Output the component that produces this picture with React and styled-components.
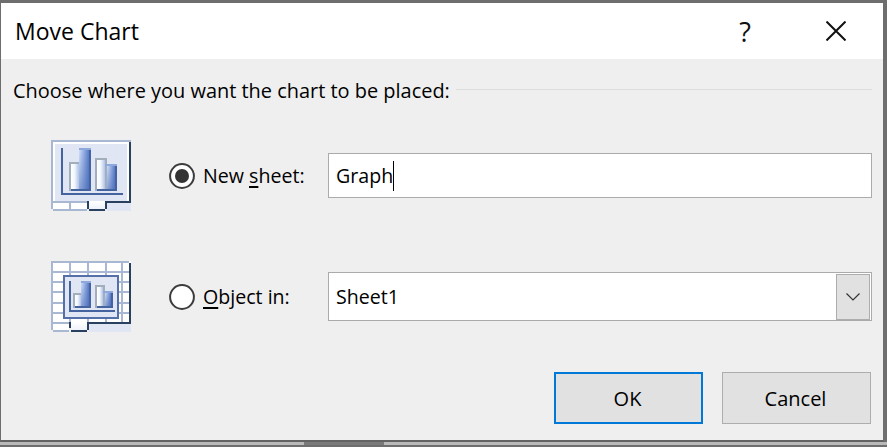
import React from "react";
import styled, { createGlobalStyle } from "styled-components";

const Global = createGlobalStyle`
  html, body { margin: 0; padding: 0; background: #6e6e6e; }
  body { font-family: "Open Sans", "Noto Sans", "Liberation Sans", sans-serif; color: #000; }
  * { box-sizing: border-box; }
`;

const Page = styled.div`
  width: 887px;
  height: 447px;
  display: flex;
  flex-direction: column;
  overflow: hidden;
  background: #6e6e6e;
`;
const Dialog = styled.div`
  width: 885px;
  height: 442px;
  display: flex;
  flex-direction: column;
  border-top: 3px solid #6e6e6e;
  border-left: 1px solid #6e6e6e;
  border-right: 2px solid #6e6e6e;
  border-bottom: 2px solid #636363;
  background: #efefef;
`;
const TitleBar = styled.div`
  height: 56px;
  flex: none;
  background: #fff;
  display: flex;
  align-items: center;
  padding-left: 14px;
`;
const Title = styled.div`
  font-size: 23px;
  flex: 1;
`;
const HelpGlyph = styled.div`
  width: 30px;
  font-size: 27px;
  text-align: center;
  margin-right: 66px;
  color: #111;
`;
const CloseButton = styled.svg`
  width: 20px;
  height: 20px;
  margin-right: 37px;
  display: block;
`;
const Body = styled.div`
  flex: 1;
  display: flex;
  flex-direction: column;
  padding: 16px 11px 0 12px;
`;
const Legend = styled.div`
  display: flex;
  align-items: center;
  height: 30px;
  gap: 6px;
  margin-bottom: 35px;
  font-size: 19.95px;
  white-space: nowrap;
`;
const LegendRule = styled.div`
  flex: 1;
  height: 1px;
  margin-top: -2px;
  background: #dcdcdc;
`;
const Row = styled.div`
  display: flex;
  align-items: center;
  height: 71px;
  padding-left: 38px;
  margin-bottom: ${p => p.$mb}px;
`;
const Pict = styled.svg`
  width: 80px;
  height: 71px;
  flex: none;
  display: block;
  shape-rendering: crispEdges;
`;
const Radio = styled.svg`
  width: 26px;
  height: 26px;
  flex: none;
  margin-left: 38px;
  display: block;
`;
const Label = styled.label`
  width: 133px;
  padding-left: 8px;
  flex: none;
  font-size: 19.6px;
  white-space: nowrap;
  u { text-underline-offset: 3px; text-decoration-thickness: 2px; }
`;
const Field = styled.div`
  flex: 1;
  height: ${p => p.$h}px;
  background: #fff;
  border: 1px solid #ababab;
  display: flex;
  align-items: center;
  padding-left: 7px;
  font-size: 19.6px;
`;
const Caret = styled.span`
  display: inline-block;
  width: 1px;
  height: 30px;
  background: #000;
  flex: none;
`;
const FieldText = styled.span`
  flex: 1;
`;
const DropButton = styled.div`
  width: 34px;
  height: 46px;
  margin-right: 1px;
  flex: none;
  background: #e1e1e1;
  border: 1px solid #adadad;
  display: flex;
  align-items: center;
  justify-content: center;
`;
const Chevron = styled.svg`
  width: 14px;
  height: 8px;
  display: block;
`;
const Buttons = styled.div`
  display: flex;
  justify-content: flex-end;
  gap: 19px;
  padding-right: 1px;
`;
const Button = styled.div`
  width: 149px;
  height: 52px;
  padding-right: 2px;
  background: #e1e1e1;
  border: ${p => (p.$primary ? "2px solid #0078d7" : "1px solid #adadad")};
  display: flex;
  align-items: center;
  justify-content: center;
  font-size: 20px;
`;
const BottomStrip = styled.div`
  height: 3px;
  flex: none;
  background: #b9b9b9;
  padding-left: 304px;
`;
const StripThumb = styled.div`
  width: 80px;
  height: 3px;
  background: #7a7a7a;
`;

const LB = "#a8b8d2", DK = "#2a4060", PALE = "#e0e6f3", AX = "#45639f", GR = "#a3aebc";

const defs = pre => (
  <defs>
    <linearGradient id={pre + "w"} x1="0" x2="1" y1="0" y2="0">
      <stop offset="0" stopColor="#ffffff" />
      <stop offset="0.45" stopColor="#f2f6fd" />
      <stop offset="1" stopColor="#b0c2e6" />
    </linearGradient>
    <linearGradient id={pre + "b"} x1="0" x2="1" y1="0" y2="0">
      <stop offset="0" stopColor="#cfdefa" />
      <stop offset="1" stopColor="#5a7cc8" />
    </linearGradient>
    <linearGradient id={pre + "s"} x1="0" x2="0" y1="0" y2="1">
      <stop offset="0" stopColor="#3f62b0" stopOpacity="0" />
      <stop offset="1" stopColor="#3f62b0" stopOpacity="0.45" />
    </linearGradient>
    <linearGradient id={pre + "t"} x1="0" x2="0" y1="0" y2="1">
      <stop offset="0" stopColor="#ffffff" />
      <stop offset="1" stopColor="#eef2fa" />
    </linearGradient>
  </defs>
);

const ChartIcon = () => (
  <Pict viewBox="0 0 80 71">
    {defs("a")}
    <rect x="0" y="0" width="80" height="71" fill="#fff" />
    <rect x="0" y="0" width="80" height="2" fill={LB} />
    <rect x="0" y="0" width="2" height="69" fill={LB} />
    <rect x="78" y="2" width="2" height="61" fill={DK} />
    <rect x="4" y="4" width="72" height="57" fill={PALE} />
    <rect x="2" y="2" width="2" height="59" fill="#fff" />
    <rect x="10" y="8" width="2" height="47" fill={AX} />
    <rect x="10" y="53" width="62" height="2" fill={AX} />
    <rect x="18" y="22" width="10" height="29" fill={GR} />
    <rect x="20" y="24" width="8" height="25" fill="url(#aw)" />
    <rect x="28" y="8" width="12" height="43" fill="#8fa8dc" />
    <rect x="28" y="10" width="10" height="39" fill="url(#ab)" />
    <rect x="28" y="10" width="10" height="39" fill="url(#as)" />
    <rect x="38" y="10" width="2" height="41" fill={AX} />
    <rect x="20" y="49" width="20" height="2" fill={AX} />
    <rect x="44" y="18" width="12" height="33" fill={GR} />
    <rect x="46" y="20" width="8" height="29" fill="url(#aw)" />
    <rect x="54" y="24" width="12" height="27" fill="#8fa8dc" />
    <rect x="56" y="26" width="8" height="23" fill="url(#ab)" />
    <rect x="56" y="26" width="8" height="23" fill="url(#as)" />
    <rect x="54" y="26" width="2" height="25" fill={GR} />
    <rect x="64" y="26" width="2" height="25" fill={AX} />
    <rect x="46" y="49" width="20" height="2" fill={AX} />
    <rect x="0" y="61" width="80" height="10" fill="#efefef" />
    <rect x="0" y="61" width="38" height="2" fill={LB} />
    <rect x="0" y="63" width="2" height="6" fill={LB} />
    <rect x="2" y="63" width="16" height="6" fill="#fff" />
    <rect x="18" y="63" width="2" height="8" fill={LB} />
    <rect x="20" y="63" width="16" height="6" fill="#fff" />
    <rect x="2" y="69" width="16" height="2" fill={LB} />
    <rect x="20" y="69" width="16" height="2" fill={LB} />
    <rect x="36" y="61" width="2" height="8" fill={DK} />
    <rect x="38" y="61" width="16" height="8" fill="url(#at)" />
    <rect x="38" y="69" width="16" height="2" fill={DK} />
    <rect x="54" y="61" width="2" height="8" fill={DK} />
    <rect x="54" y="61" width="26" height="2" fill={DK} />
    <rect x="56" y="63" width="24" height="8" fill={PALE} />
  </Pict>
);

const hLines = [0, 10, 20, 30, 41, 51];
const vLines = [0, 18, 36, 54, 70];

const ObjectIcon = () => (
  <Pict viewBox="0 0 80 71">
    {defs("c")}
    <rect x="0" y="0" width="80" height="61" fill="#fff" />
    {hLines.map(y => <rect key={y} x="0" y={y} width="78" height="2" fill={LB} />)}
    {vLines.map(x => <rect key={x} x={x} y="0" width="2" height="61" fill={LB} />)}
    <rect x="78" y="2" width="2" height="61" fill={DK} />
    <rect x="12" y="14" width="56" height="44" fill="#5570a8" />
    <rect x="14" y="16" width="52" height="40" fill={PALE} />
    <rect x="18" y="20" width="2" height="31" fill={AX} />
    <rect x="18" y="49" width="46" height="2" fill={AX} />
    <rect x="22" y="32" width="8" height="15" fill={GR} />
    <rect x="24" y="34" width="6" height="11" fill="url(#cw)" />
    <rect x="30" y="20" width="10" height="27" fill="#8fa8dc" />
    <rect x="30" y="22" width="8" height="23" fill="url(#cb)" />
    <rect x="30" y="22" width="8" height="23" fill="url(#cs)" />
    <rect x="38" y="22" width="2" height="25" fill={AX} />
    <rect x="24" y="45" width="16" height="2" fill={AX} />
    <rect x="44" y="24" width="10" height="23" fill={GR} />
    <rect x="46" y="26" width="6" height="19" fill="url(#cw)" />
    <rect x="52" y="30" width="10" height="17" fill="#8fa8dc" />
    <rect x="54" y="32" width="6" height="13" fill="url(#cb)" />
    <rect x="54" y="32" width="6" height="13" fill="url(#cs)" />
    <rect x="52" y="32" width="2" height="15" fill={GR} />
    <rect x="60" y="32" width="2" height="15" fill={AX} />
    <rect x="46" y="45" width="16" height="2" fill={AX} />
    <rect x="0" y="61" width="80" height="10" fill="#efefef" />
    <rect x="0" y="61" width="18" height="2" fill={LB} />
    <rect x="0" y="63" width="2" height="6" fill={LB} />
    <rect x="2" y="63" width="16" height="6" fill="#fff" />
    <rect x="2" y="69" width="16" height="2" fill={LB} />
    <rect x="18" y="61" width="2" height="6" fill={DK} />
    <rect x="20" y="61" width="16" height="8" fill="url(#ct)" />
    <rect x="20" y="69" width="16" height="2" fill={DK} />
    <rect x="36" y="61" width="2" height="8" fill={DK} />
    <rect x="36" y="61" width="44" height="2" fill={DK} />
    <rect x="38" y="63" width="42" height="8" fill={PALE} />
  </Pict>
);

const RadioIcon = ({ on }) => (
  <Radio viewBox="0 0 26 26">
    <circle cx="13" cy="13" r="11.9" fill="#fff" stroke="#3c3c3c" strokeWidth="2" />
    {on && <circle cx="13" cy="13" r="7" fill="#333" />}
  </Radio>
);

export default function App() {
  return (
    <Page>
      <Global />
      <Dialog>
        <TitleBar>
          <Title>Move Chart</Title>
          <HelpGlyph>?</HelpGlyph>
          <CloseButton viewBox="0 0 20 20">
            <path d="M0.5 0.5 L19.5 19.5 M19.5 0.5 L0.5 19.5" stroke="#111" strokeWidth="2" fill="none" />
          </CloseButton>
        </TitleBar>
        <Body>
          <Legend>
            Choose where you want the chart to be placed:
            <LegendRule />
          </Legend>
          <Row $mb={50}>
            <ChartIcon />
            <RadioIcon on />
            <Label>New <u>s</u>heet:</Label>
            <Field $h={45}>
              <span>Graph</span>
              <Caret />
            </Field>
          </Row>
          <Row $mb={40}>
            <ObjectIcon />
            <RadioIcon />
            <Label><u>O</u>bject in:</Label>
            <Field $h={49}>
              <FieldText>Sheet1</FieldText>
              <DropButton>
                <Chevron viewBox="0 0 14 8">
                  <path d="M0.5 0.5 L7 7 L13.5 0.5" fill="none" stroke="#333" strokeWidth="1.2" />
                </Chevron>
              </DropButton>
            </Field>
          </Row>
          <Buttons>
            <Button $primary>OK</Button>
            <Button>Cancel</Button>
          </Buttons>
        </Body>
      </Dialog>
      <BottomStrip><StripThumb /></BottomStrip>
    </Page>
  );
}
